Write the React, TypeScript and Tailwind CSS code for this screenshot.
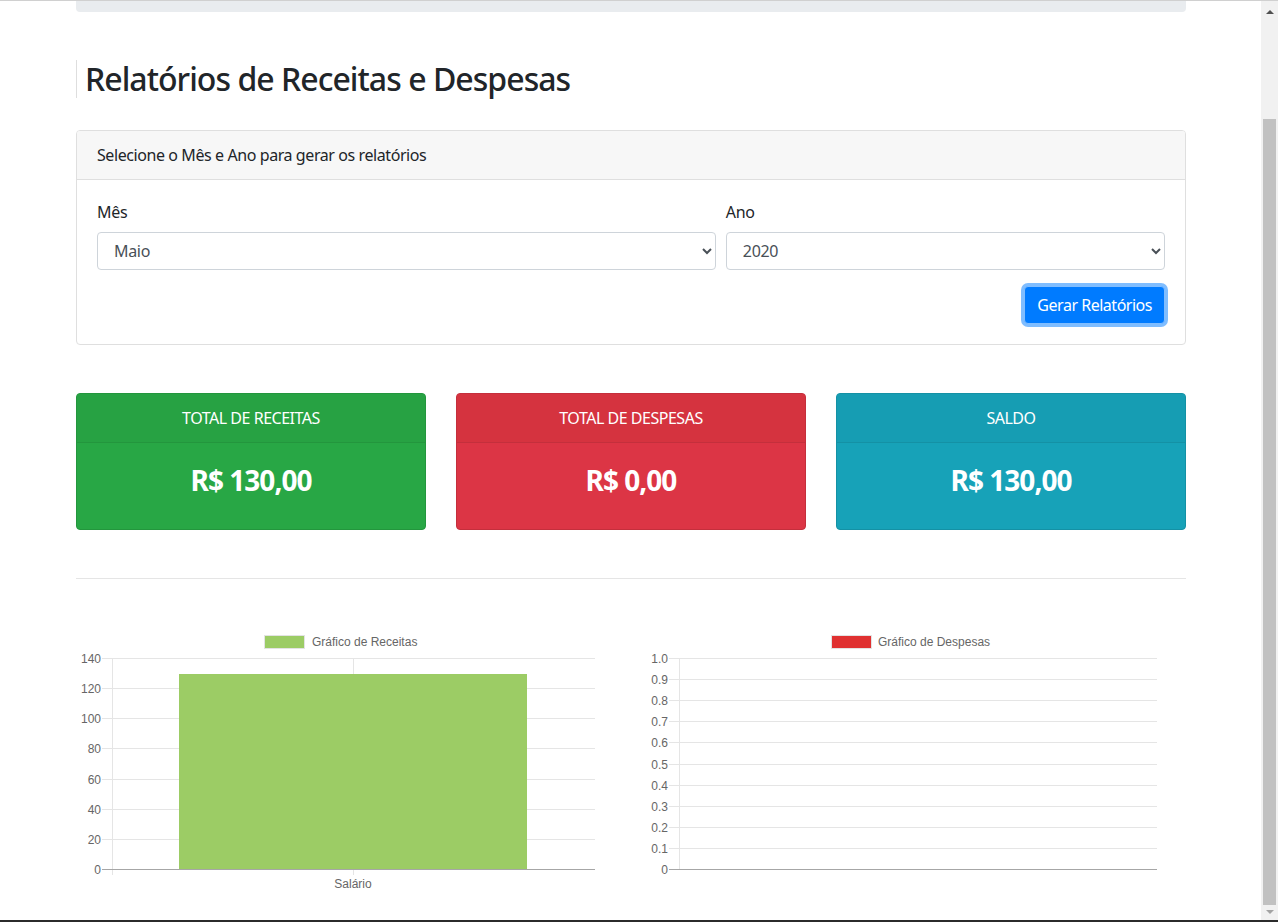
import React from "react";

const SANS = "font-['Noto_Sans','Open_Sans',sans-serif]";

function LeftChart() {
  const ys = [140, 120, 100, 80, 60, 40, 20, 0];
  const top = 38;
  const bottom = 249;
  const step = (bottom - top) / 7;
  return (
    <svg width="555" height="280" className="block">
      <rect x="188.5" y="15.5" width="40" height="13" fill="#9ccc65" stroke="#e3e3e3" />
      <text x="236" y="26" fontSize="12" fill="#666" fontFamily="Liberation Sans, Arial, sans-serif">
        Gráfico de Receitas
      </text>
      {ys.map((v, i) => {
        const y = Math.round(top + i * step) + 0.5;
        return (
          <g key={v}>
            <line x1="26" x2="519" y1={y} y2={y} stroke={v === 0 ? "#a6a6a6" : "#e5e5e5"} />
            <text x="25" y={y + 4} fontSize="12" fill="#666" textAnchor="end" fontFamily="Liberation Sans, Arial, sans-serif">
              {v}
            </text>
          </g>
        );
      })}
      <line x1="36.5" x2="36.5" y1={top} y2={bottom + 6} stroke="#e5e5e5" />
      <line x1="277.5" x2="277.5" y1={top} y2={bottom + 6} stroke="#e5e5e5" />
      <rect x="103" y="54" width="348" height={bottom - 54} fill="#9ccc65" />
      <line x1="36" x2="519" y1={bottom + 0.5} y2={bottom + 0.5} stroke="#a6a6a6" />
      <text x="277" y="268" fontSize="12" fill="#666" textAnchor="middle" fontFamily="Liberation Sans, Arial, sans-serif">
        Salário
      </text>
    </svg>
  );
}

function RightChart() {
  const ys = ["1.0", "0.9", "0.8", "0.7", "0.6", "0.5", "0.4", "0.3", "0.2", "0.1", "0"];
  const top = 38;
  const bottom = 249;
  const step = (bottom - top) / 10;
  return (
    <svg width="540" height="280" className="block">
      <rect x="185.5" y="15.5" width="40" height="13" fill="#e03131" stroke="#e3e3e3" />
      <text x="232" y="26" fontSize="12" fill="#666" fontFamily="Liberation Sans, Arial, sans-serif">
        Gráfico de Despesas
      </text>
      {ys.map((v, i) => {
        const y = Math.round(top + i * step) + 0.5;
        return (
          <g key={v}>
            <line x1="23" x2="511" y1={y} y2={y} stroke={v === "0" ? "#a6a6a6" : "#e5e5e5"} />
            <text x="22" y={y + 4} fontSize="12" fill="#666" textAnchor="end" fontFamily="Liberation Sans, Arial, sans-serif">
              {v}
            </text>
          </g>
        );
      })}
      <line x1="33.5" x2="33.5" y1={top} y2={bottom} stroke="#e5e5e5" />
    </svg>
  );
}

function StatCard({ title, value, body, head, border }: { title: string; value: string; body: string; head: string; border: string }) {
  return (
    <div className={`flex flex-col rounded-[4px] border ${border} ${body} text-white`}>
      <div className={`h-[49px] flex items-center justify-center border-b ${border} ${head} rounded-t-[3px] text-[16px] tracking-[-0.03em]`}>
        {title}
      </div>
      <div className="pt-5 pb-8 text-center">
        <div className="text-[28px] leading-[34px] font-bold tracking-[-0.035em]">{value}</div>
      </div>
    </div>
  );
}

export default function App() {
  return (
    <div className={`w-[1278px] h-[922px] overflow-hidden flex flex-col bg-white ${SANS} text-[#212529]`}>
      <div className="h-px bg-[#d0d0d0]" />
      <div className="flex flex-1 min-h-0">
        <div className="flex-1 overflow-hidden pl-[76px]">
          <div className="w-[1110px]">
            <div className="h-[11px] bg-[#e9ecef] rounded-b-[4px]" />

            <h2 className="mt-[48px] h-[38px] border-l border-[#dedede] pl-[8px] text-[32px] leading-[38px] font-medium tracking-[-0.03em]">
              Relatórios de Receitas e Despesas
            </h2>

            <div className="mt-[32px] border border-[#dfdfdf] rounded-[4px]">
              <div className="h-[49px] flex items-center px-5 bg-[#f7f7f7] border-b border-[#dfdfdf] rounded-t-[3px] text-[16px] tracking-[-0.026em]">
                Selecione o Mês e Ano para gerar os relatórios
              </div>
              <div className="p-5">
                <div className="grid grid-cols-12 gap-x-[10px]">
                  <div className="col-span-7 flex flex-col">
                    <label className="text-[16px] leading-6 mb-2 tracking-[-0.02em]">Mês</label>
                    <select
                      defaultValue="Maio"
                      className="h-[38px] border border-[#ced4da] rounded-[4px] pl-[12px] pr-2 text-[16px] text-[#495057] bg-white tracking-[-0.02em]"
                    >
                      <option>Maio</option>
                    </select>
                  </div>
                  <div className="col-span-5 flex flex-col">
                    <label className="text-[16px] leading-6 mb-2 tracking-[-0.02em]">Ano</label>
                    <select
                      defaultValue="2020"
                      className="h-[38px] border border-[#ced4da] rounded-[4px] pl-[12px] pr-2 text-[16px] text-[#495057] bg-white tracking-[-0.02em]"
                    >
                      <option>2020</option>
                    </select>
                  </div>
                </div>
                <div className="flex justify-end mt-4">
                  <button className="h-[38px] px-3 rounded-[4px] bg-[#007bff] border border-[#80bdff] text-white text-[16px] tracking-[-0.03em] shadow-[0_0_0_3px_rgba(0,123,255,0.5)]">
                    Gerar Relatórios
                  </button>
                </div>
              </div>
            </div>

            <div className="mt-[48px] grid grid-cols-3 gap-[30px]">
              <StatCard title="TOTAL DE RECEITAS" value="R$ 130,00" body="bg-[#28a745]" head="bg-[#27a243]" border="border-[#23963d]" />
              <StatCard title="TOTAL DE DESPESAS" value="R$ 0,00" body="bg-[#dc3545]" head="bg-[#d5333f]" border="border-[#c42f3c]" />
              <StatCard title="SALDO" value="R$ 130,00" body="bg-[#17a2b8]" head="bg-[#169db3]" border="border-[#1491a5]" />
            </div>

            <hr className="mt-[48px] border-0 border-t border-[#e5e5e5]" />

            <div className="mt-[41px] grid grid-cols-2 gap-[30px]">
              <LeftChart />
              <RightChart />
            </div>
          </div>
        </div>

        <div className="w-[17px] bg-[#f1f1f1] flex flex-col items-center">
          <div className="h-[118px] w-full flex justify-center pt-[9px]">
            <div className="w-0 h-0 border-l-[4px] border-r-[4px] border-b-[4px] border-l-transparent border-r-transparent border-b-[#505050]" />
          </div>
          <div className="w-[13px] flex-1 bg-[#c1c1c1]" />
          <div className="h-[15px] w-full flex justify-center pt-[5px]">
            <div className="w-0 h-0 border-l-[4px] border-r-[4px] border-t-[4px] border-l-transparent border-r-transparent border-t-[#a3a3a3]" />
          </div>
        </div>
      </div>
      <div className="h-[2px] bg-[#2b2b2b]" />
    </div>
  );
}
